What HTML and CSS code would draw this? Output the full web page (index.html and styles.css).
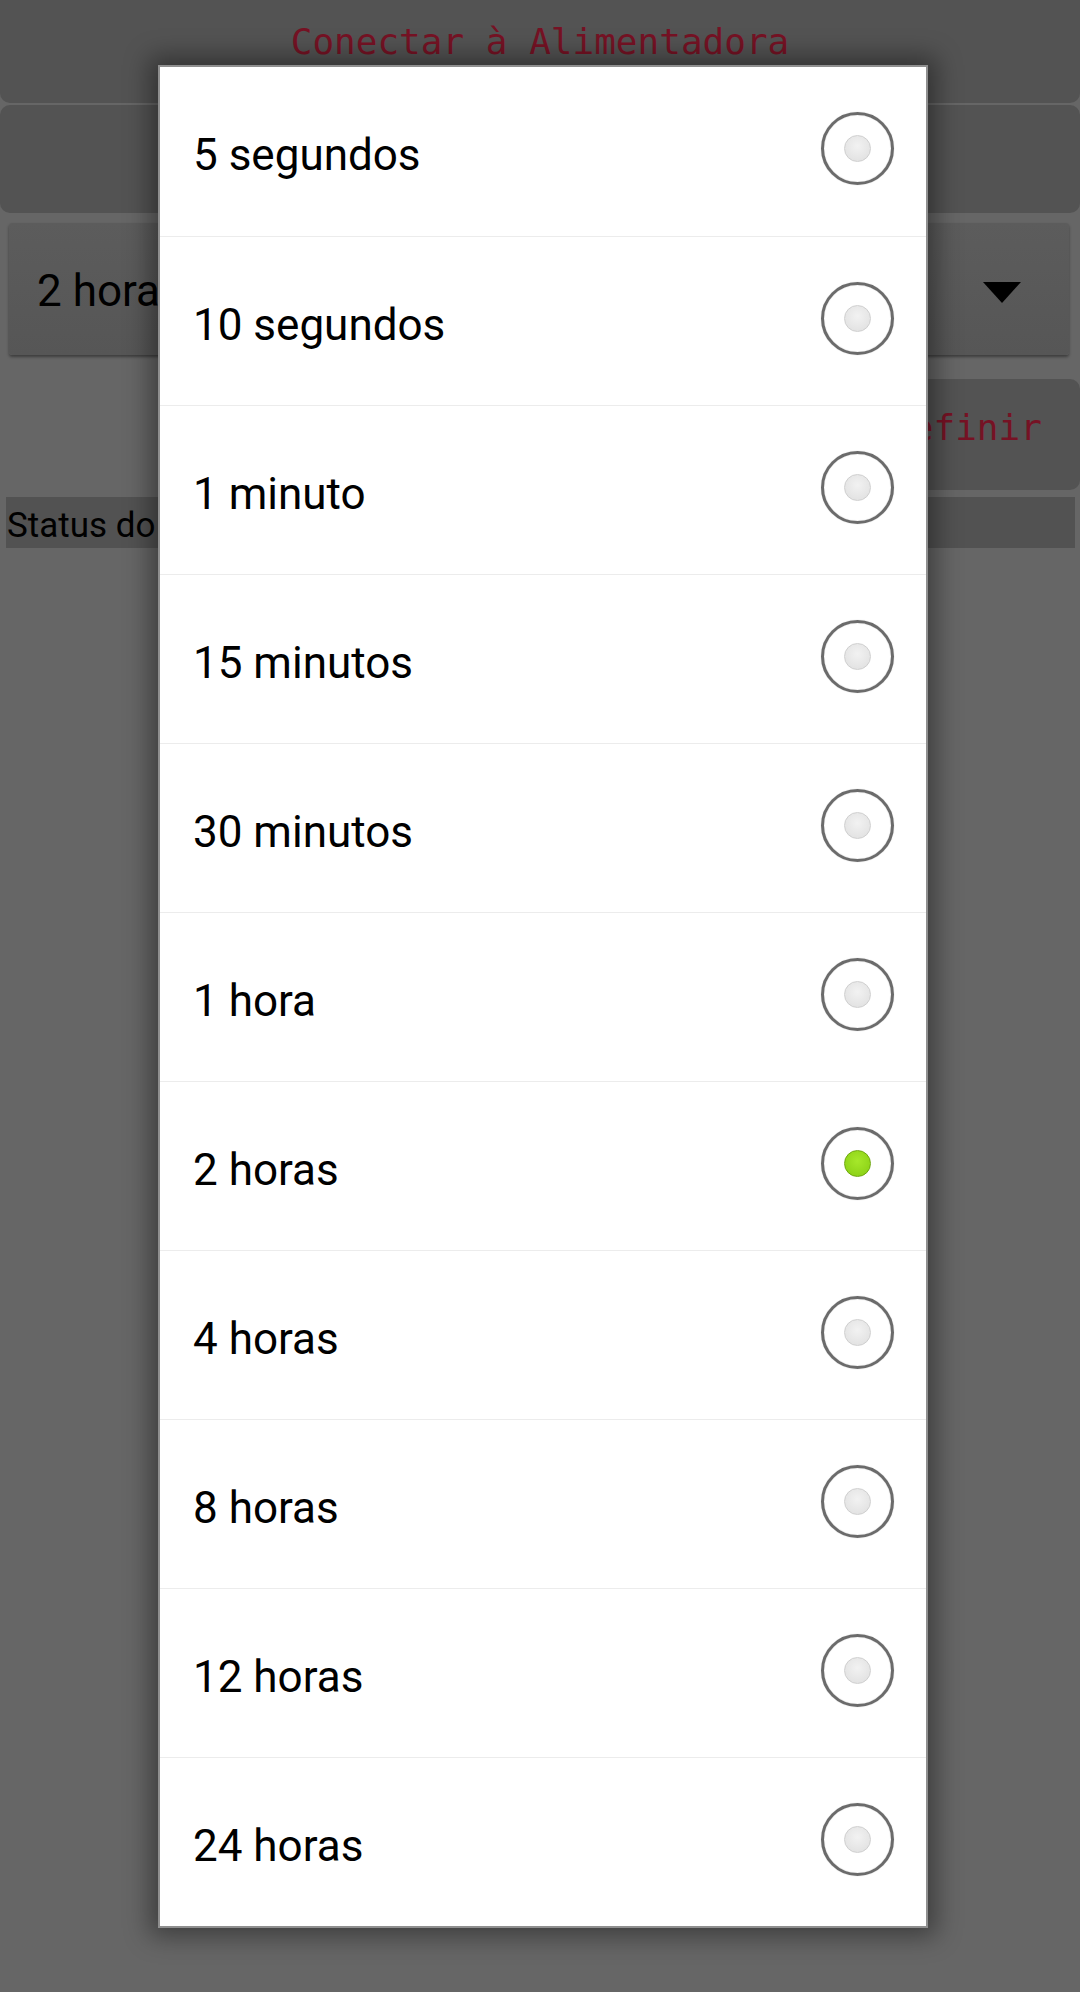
FILE: index.html
```html
<!DOCTYPE html>
<html lang="pt">
<head>
<meta charset="utf-8">
<title>Alimentadora</title>
<link rel="stylesheet" href="styles.css">
</head>
<body>
<div class="app">
  <div class="btn btn-top"><span class="mono-label">Conectar à Alimentadora</span></div>
  <div class="btn btn-second"></div>
  <div class="spinner">
    <span class="spinner-text">2 horas</span>
    <span class="spinner-arrow"></span>
  </div>
  <div class="define-row">
    <div class="btn btn-define"><span class="mono-label">Definir</span></div>
  </div>
  <div class="status">Status do dispositivo</div>
</div>

<div class="dialog">
  <div class="row"><span class="label">5 segundos</span><span class="radio"></span></div>
  <div class="row"><span class="label">10 segundos</span><span class="radio"></span></div>
  <div class="row"><span class="label">1 minuto</span><span class="radio"></span></div>
  <div class="row"><span class="label">15 minutos</span><span class="radio"></span></div>
  <div class="row"><span class="label">30 minutos</span><span class="radio"></span></div>
  <div class="row"><span class="label">1 hora</span><span class="radio"></span></div>
  <div class="row"><span class="label">2 horas</span><span class="radio checked"></span></div>
  <div class="row"><span class="label">4 horas</span><span class="radio"></span></div>
  <div class="row"><span class="label">8 horas</span><span class="radio"></span></div>
  <div class="row"><span class="label">12 horas</span><span class="radio"></span></div>
  <div class="row"><span class="label">24 horas</span><span class="radio"></span></div>
</div>
</body>
</html>
```

FILE: styles.css
```css
html, body {
  margin: 0;
  padding: 0;
}
body {
  width: 1080px;
  height: 1992px;
  background: #666666;
  font-family: Roboto, "Noto Sans", sans-serif;
  overflow: hidden;
  position: relative;
}
.app {
  display: flex;
  flex-direction: column;
}
.btn {
  background: #535353;
  border-radius: 10px;
  display: flex;
  justify-content: center;
  box-sizing: border-box;
}
.mono-label {
  font-family: "DejaVu Sans Mono", "Liberation Mono", monospace;
  font-size: 36px;
  line-height: 42px;
  color: #761224;
}
.btn-top {
  height: 103px;
  border-top-left-radius: 0;
  border-top-right-radius: 0;
  padding-top: 21px;
}
.btn-second {
  height: 108px;
  margin-top: 2px;
}
.spinner {
  margin: 10px 11px 0 9px;
  height: 132px;
  background: linear-gradient(#5c5c5c, #565656);
  border-radius: 3px;
  box-shadow: 0 2px 3px rgba(0,0,0,0.4);
  display: flex;
  align-items: center;
  justify-content: space-between;
  padding: 0 48px 0 28px;
  box-sizing: border-box;
}
.spinner-text {
  font-size: 44px;
  color: #000;
  margin-top: 4px;
}
.spinner-arrow {
  width: 0;
  height: 0;
  border-left: 19px solid transparent;
  border-right: 19px solid transparent;
  border-top: 21px solid #000;
  margin-top: 6px;
}
.define-row {
  display: flex;
  justify-content: flex-end;
  margin-top: 24px;
}
.btn-define {
  width: 228px;
  height: 111px;
  align-items: center;
  padding-bottom: 14px;
}
.status {
  margin: 7px 5px 0 6px;
  height: 51px;
  background: #525252;
  color: #000;
  font-size: 35px;
  line-height: 51px;
  padding-top: 3px;
  box-sizing: border-box;
  padding-left: 1px;
  white-space: nowrap;
  overflow: hidden;
}
.dialog {
  position: absolute;
  left: 158px;
  top: 65px;
  width: 770px;
  box-sizing: border-box;
  background: #fff;
  border: 2px solid #8f8f8f;
  box-shadow: 0 0 24px 8px rgba(0,0,0,0.4);
}
.row {
  height: 169px;
  box-sizing: border-box;
  border-top: 1px solid #ececec;
  display: flex;
  align-items: center;
  justify-content: space-between;
  padding: 0 32px 0 33px;
}
.row:first-child {
  border-top: none;
}
.label {
  font-size: 44px;
  color: #000;
  margin-top: 7px;
}
.radio {
  width: 73px;
  height: 73px;
  box-sizing: border-box;
  border: 3px solid #6b6b6b;
  border-radius: 50%;
  display: flex;
  align-items: center;
  justify-content: center;
  margin-top: -6px;
  box-shadow: 0 0 1px rgba(0,0,0,0.3), inset 0 0 1px rgba(0,0,0,0.3);
}
.radio::after {
  content: "";
  width: 25px;
  height: 25px;
  border-radius: 50%;
  background: radial-gradient(circle at 50% 40%, #f2f2f2, #dedede);
  border: 1px solid #cfcfcf;
}
.radio.checked::after {
  background: radial-gradient(circle at 50% 40%, #a6e82a, #86cc12);
  border: 1px solid #6ea80e;
}
```
